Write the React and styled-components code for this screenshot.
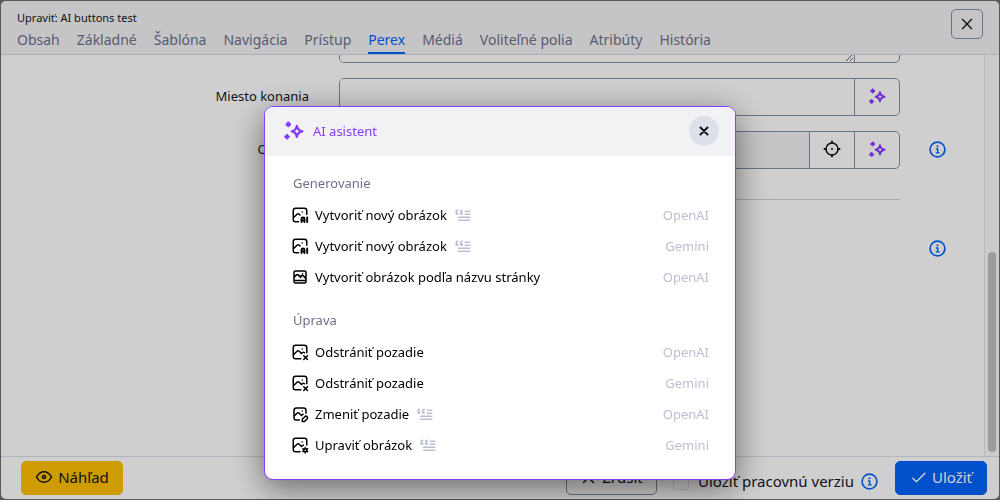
import React from "react";
import styled, { createGlobalStyle } from "styled-components";

const Global = createGlobalStyle`
  * { box-sizing: border-box; }
  body { margin: 0; background: #6e6e70; }
  body, button, input, textarea { font-family: "Noto Sans", "Open Sans", sans-serif; color: #13151b; }
  button { cursor: pointer; margin: 0; padding: 0; border: 0; background: none; }
`;

const Window = styled.div`
  height: 100vh;
  padding: 1px;
`;
const Editor = styled.main`
  height: 100%;
  display: flex;
  flex-direction: column;
  background: #fff;
  border-radius: 5px;
  overflow: hidden;
`;
const Header = styled.header`
  display: flex;
  justify-content: space-between;
  align-items: flex-start;
  flex: none;
  height: 54px;
  padding: 8px 16px 0;
  background: #f3f3f6;
  border-bottom: 1px solid #d5d8e3;
`;
const Title = styled.h1`
  margin: 0;
  font-size: 11px;
  font-weight: 400;
  line-height: 18px;
`;
const Tabs = styled.nav`
  display: flex;
  gap: 17px;
`;
const Tab = styled.a`
  height: 27px;
  font-size: 14px;
  line-height: 26px;
  white-space: nowrap;
  text-decoration: none;
  color: ${(p) => (p.$active ? "#0063fb" : "#6c718a")};
  border-bottom: 2px solid ${(p) => (p.$active ? "#0063fb" : "transparent")};
`;
const WindowClose = styled.button`
  display: grid;
  place-items: center;
  width: 32px;
  height: 30px;
  border: 1px solid #868ea5;
  border-radius: 5px;
`;
const Body = styled.div`
  flex: 1;
  min-height: 0;
  display: flex;
  overflow: hidden;
`;
const Form = styled.form`
  flex: 1;
  display: flex;
  flex-direction: column;
`;
const Field = styled.div`
  flex: none;
  display: grid;
  grid-template-columns: 338px minmax(0, 1fr) 84px;
  align-items: center;
  margin-bottom: 15px;
  ${(p) => p.$scrolled && "margin-top: -52px;"}
`;
const Label = styled.label`
  padding: 0 30px 2px 0;
  text-align: right;
  font-size: 13px;
`;
const Group = styled.div`
  display: flex;
  min-height: 38px;
  border: 1px solid #868ea5;
  border-radius: 5px;
  overflow: hidden;
`;
const TextInput = styled.input`
  flex: 1;
  min-width: 0;
  border: 0;
  padding: 0 12px;
  font-size: 13px;
  background: ${(p) => (p.readOnly ? "#f3f3f6" : "#fff")};
`;
const TextArea = styled.textarea`
  flex: 1;
  min-width: 0;
  height: 58px;
  border: 0;
  display: block;
`;
const Addon = styled.button`
  display: grid;
  place-items: center;
  width: 45px;
  padding-bottom: 2px;
  border-left: 1px solid #868ea5;
`;
const InfoButton = styled.button`
  display: grid;
  place-items: center;
  color: #0063fb;
`;
const Hint = styled.div`
  display: grid;
  place-items: center;
  padding: 0 10px 2px 0;
`;
const Divider = styled.hr`
  flex: none;
  margin: 15px 84px 40px 338px;
  border: 0;
  border-top: 1px solid #d0d0d3;
`;
const HintRow = styled.div`
  display: grid;
  grid-template-columns: 1fr 84px;
`;
const ScrollTrack = styled.div`
  flex: none;
  display: flex;
  flex-direction: column;
  justify-content: flex-end;
  width: 15px;
  padding: 4px 3px 4px 3px;
  background: #fafafa;
  border-left: 1px solid #e4e4e4;
`;
const ScrollThumb = styled.div`
  height: 51%;
  border-radius: 4px;
  background: #c1c1c1;
`;
const Footer = styled.footer`
  flex: none;
  display: flex;
  align-items: flex-start;
  height: 43px;
  padding: 4px 12px 0 20px;
  border-top: 1px solid #dfe1e9;
`;
const Action = styled.button`
  display: flex;
  align-items: center;
  justify-content: center;
  gap: 5px;
  height: 34px;
  padding-bottom: 2px;
  width: ${(p) => p.$width}px;
  font-size: 15px;
  border-radius: 5px;
  background: ${(p) => p.$bg || "#fff"};
  color: ${(p) => p.$fg || "#13151b"};
  border: 1px solid ${(p) => p.$bg || "#868ea5"};
`;
const Spacer = styled.div`
  flex: 1;
`;
const Draft = styled.div`
  display: flex;
  align-items: center;
  gap: 7px;
  padding: 7px 17px 0 16px;
`;
const DraftLabel = styled.label`
  display: flex;
  align-items: center;
  gap: 9px;
  font-size: 15px;
  line-height: 27px;
  white-space: nowrap;
`;
const Checkbox = styled.input`
  appearance: none;
  width: 16px;
  height: 16px;
  margin: 0;
  border: 1px solid #dcdee6;
  border-radius: 3px;
`;

const Overlay = styled.div`
  position: fixed;
  inset: 0;
  display: flex;
  justify-content: center;
  align-items: flex-start;
  padding-top: 106px;
  background: rgba(0, 0, 0, 0.19);
`;
const Dialog = styled.section`
  width: 472px;
  border: 1px solid #873bff;
  border-radius: 9px;
  background: #fff;
  overflow: hidden;
  box-shadow: 0 8px 32px rgba(0, 0, 0, 0.5);
`;
const DialogHeader = styled.header`
  display: flex;
  align-items: center;
  gap: 9px;
  height: 49px;
  padding: 0 16px 1px 19px;
  background: #f2f2f5;
  color: #873bff;
`;
const DialogTitle = styled.h2`
  flex: 1;
  margin: 0;
  font-size: 13px;
  font-weight: 400;
`;
const DialogClose = styled.button`
  display: grid;
  place-items: center;
  width: 30px;
  height: 30px;
  border-radius: 50%;
  background: #dde0e8;
`;
const DialogBody = styled.div`
  display: flex;
  flex-direction: column;
  gap: 13px;
  padding: 12px 26px 19px 26px;
`;
const GroupTitle = styled.h3`
  margin: 0;
  padding-left: 2px;
  font-size: 13px;
  font-weight: 400;
  line-height: 31px;
  color: #6c718a;
`;
const Option = styled.button`
  display: flex;
  align-items: center;
  gap: 6px;
  width: 100%;
  height: 31px;
  font-size: 13px;
  color: #000;
  text-align: left;
`;
const Provider = styled.span`
  margin-left: auto;
  color: #bbbfd1;
`;
const Quote = styled.span`
  display: flex;
  padding-left: 1px;
  color: #bbbfd3;
`;
const Svg = styled.svg`
  display: block;
  fill: none;
  stroke: currentColor;
  stroke-linecap: round;
  stroke-linejoin: round;
`;

function Icon({ size = 18, width = 2, children }) {
  return (
    <Svg width={size} height={size} viewBox="0 0 24 24" strokeWidth={width} aria-hidden="true">
      {children}
    </Svg>
  );
}
const Cross = ({ size, width }) => (
  <Icon size={size} width={width}>
    <path d="M5 5l14 14M19 5L5 19" />
  </Icon>
);
const Sparkles = ({ size = 17 }) => (
  <Svg width={size} height={size} viewBox="0 0 18 18" strokeWidth="2.100" color="#873bff" aria-hidden="true">
    <path d="M11.600 4.400c.5 3.200 1.600 4.300 4.900 4.900c-3.300.6-4.400 1.700-4.900 4.900c-.5-3.200-1.600-4.300-4.600-4.900c3-.6 4.100-1.700 4.600-4.900z" />
    <path d="M3.900 1.800v2.600M2.600 3.100h2.600M2.700 12.900v2.600M1.400 14.200h2.600" strokeWidth="2.500" />
  </Svg>
);
const Info = () => (
  <Svg width="17" height="17" viewBox="0 0 17 17" strokeWidth="1.700" aria-hidden="true">
    <circle cx="8.500" cy="8.500" r="7.400" />
    <path d="M7.400 8h1.300v3.800M7.400 11.900h2.700" strokeWidth="1.400" />
    <path d="M8.500 5.300v.1" strokeWidth="1.900" />
  </Svg>
);

const photoArt = {
  ai: (
    <>
      <path d="M15 8h.01M10 21h-4a3 3 0 0 1 -3 -3v-12a3 3 0 0 1 3 -3h12a3 3 0 0 1 3 3v5M3 16l5 -5c.928 -.893 2.072 -.893 3 0l1 1" />
      <path d="M14 21.4v-4a2 2 0 1 1 4 0v4M14 19.4h4M21.6 15.4v6" strokeWidth="2.5" />
    </>
  ),
  page: (
    <path d="M6 4h12a2 2 0 0 1 2 2v12a2 2 0 0 1 -2 2h-12a2 2 0 0 1 -2 -2v-12a2 2 0 0 1 2 -2zM4 16.500h16M4 12.500l3 -3c.9 -.9 2 -.9 3 0l3 3M12.500 11.500l1 -1c.9 -.9 2 -.9 3 0l3 3M15.500 7.500h.01" />
  ),
  remove: (
    <path d="M15 8h.01M13 21h-7a3 3 0 0 1 -3 -3v-12a3 3 0 0 1 3 -3h12a3 3 0 0 1 3 3v7M3 16l5 -5c.928 -.893 2.072 -.893 3 0l3 3M14 14l1 -1c.928 -.893 2.072 -.893 3 0M22 22l-5 -5M17 22l5 -5" />
  ),
  edit: (
    <path d="M15 8h.01M11 20h-4a3 3 0 0 1 -3 -3v-10a3 3 0 0 1 3 -3h10a3 3 0 0 1 3 3v4M4 15l4 -4c.928 -.893 2.072 -.893 3 0l3 3M14 14l1 -1c.31 -.298 .644 -.497 .987 -.596M18.42 15.61a2.100 2.100 0 0 1 2.970 2.970l-3.390 3.420h-3v-3l3.420 -3.390z" />
  ),
  adjust: (
    <>
      <path d="M15 8h.01M12 21h-6a3 3 0 0 1 -3 -3v-12a3 3 0 0 1 3 -3h12a3 3 0 0 1 3 3v6M3 16l5 -5c.928 -.893 2.072 -.893 3 0l3 3M14 14l1 -1c.48 -.46 1 -.7 1.600 -.67" />
      <circle cx="19" cy="19" r="2.200" strokeWidth="2.200" />
      <path d="M19 15.200v1M19 21.800v1M22.300 17.100l-.9 .5M16.600 20.400l-.9 .5M15.700 17.100l.9 .5M21.400 20.400l.9 .5" strokeWidth="1.800" />
    </>
  ),
};

const groups = [
  {
    title: "Generovanie",
    items: [
      { icon: "ai", text: "Vytvoriť nový obrázok", prompt: true, provider: "OpenAI" },
      { icon: "ai", text: "Vytvoriť nový obrázok", prompt: true, provider: "Gemini" },
      { icon: "page", text: "Vytvoriť obrázok podľa názvu stránky", provider: "OpenAI" },
    ],
  },
  {
    title: "Úprava",
    items: [
      { icon: "remove", text: "Odstrániť pozadie", provider: "OpenAI" },
      { icon: "remove", text: "Odstrániť pozadie", provider: "Gemini" },
      { icon: "edit", text: "Zmeniť pozadie", prompt: true, provider: "OpenAI" },
      { icon: "adjust", text: "Upraviť obrázok", prompt: true, provider: "Gemini" },
    ],
  },
];
const tabs = ["Obsah", "Základné", "Šablóna", "Navigácia", "Prístup", "Perex", "Médiá", "Voliteľné polia", "Atribúty", "História"];

export default function App() {
  return (
    <>
      <Global />
      <Window>
        <Editor>
          <Header>
            <div>
              <Title>Upraviť: AI buttons test</Title>
              <Tabs>
                {tabs.map((t) => (
                  <Tab key={t} href="#" $active={t === "Perex"}>{t}</Tab>
                ))}
              </Tabs>
            </div>
            <WindowClose aria-label="Zavrieť"><Cross size={16} width={2} /></WindowClose>
          </Header>
          <Body>
            <Form>
              <Field $scrolled>
                <span />
                <Group>
                  <TextArea aria-label="Perex" />
                  <Addon type="button" aria-label="AI asistent" />
                </Group>
              </Field>
              <Field>
                <Label htmlFor="place">Miesto konania</Label>
                <Group>
                  <TextInput id="place" />
                  <Addon type="button" aria-label="AI asistent"><Sparkles /></Addon>
                </Group>
              </Field>
              <Field>
                <Label htmlFor="image">Obrázok</Label>
                <Group>
                  <TextInput id="image" readOnly />
                  <Addon type="button" aria-label="Vybrať">
                    <Icon size={18} width={2}>
                      <circle cx="12" cy="12" r="8" />
                      <path d="M12 12h.01M12 2v2M12 20v2M2 12h2M20 12h2" strokeWidth="2.600" />
                    </Icon>
                  </Addon>
                  <Addon type="button" aria-label="AI asistent"><Sparkles /></Addon>
                </Group>
                <Hint>
                  <InfoButton type="button" aria-label="Informácie"><Info /></InfoButton>
                </Hint>
              </Field>
              <Divider />
              <HintRow>
                <span />
                <Hint>
                  <InfoButton type="button" aria-label="Informácie"><Info /></InfoButton>
                </Hint>
              </HintRow>
            </Form>
            <ScrollTrack><ScrollThumb /></ScrollTrack>
          </Body>
          <Footer>
            <Action $width={102} $bg="#ffc000">
              <Icon size={18} width={2}>
                <circle cx="12" cy="12" r="2" />
                <path d="M22 12c-2.700 4.700 -6 7 -10 7s-7.300 -2.300 -10 -7c2.700 -4.700 6 -7 10 -7s7.300 2.300 10 7" />
              </Icon>
              Náhľad
            </Action>
            <Spacer />
            <Action $width={91}><Cross size={17} width={2} />Zrušiť</Action>
            <Draft>
              <DraftLabel><Checkbox type="checkbox" />Uložiť pracovnú verziu</DraftLabel>
              <InfoButton aria-label="Informácie"><Info /></InfoButton>
            </Draft>
            <Action $width={92} $bg="#0063fb" $fg="#fff">
              <Icon size={17} width={2}><path d="M4 13l5 5L21 6" /></Icon>
              Uložiť
            </Action>
          </Footer>
        </Editor>
      </Window>
      <Overlay>
        <Dialog role="dialog" aria-labelledby="ai-title">
          <DialogHeader>
            <Sparkles size={20} />
            <DialogTitle id="ai-title">AI asistent</DialogTitle>
            <DialogClose aria-label="Zavrieť"><Cross size={12} width={4} /></DialogClose>
          </DialogHeader>
          <DialogBody>
            {groups.map((g) => (
              <div key={g.title}>
                <GroupTitle>{g.title}</GroupTitle>
                {g.items.map((it, i) => (
                  <Option key={i}>
                    <Icon size={18} width={2}>{photoArt[it.icon]}</Icon>
                    {it.text}
                    {it.prompt && (
                      <Quote>
                        <Icon size={18} width={2}>
                          <path d="M6 15h15M21 19h-15M15 11h6M21 7h-6M9 9h1a1 1 0 1 1 -1 1v-2.500a2 2 0 0 1 2 -2M3 9h1a1 1 0 1 1 -1 1v-2.500a2 2 0 0 1 2 -2" />
                        </Icon>
                      </Quote>
                    )}
                    <Provider>{it.provider}</Provider>
                  </Option>
                ))}
              </div>
            ))}
          </DialogBody>
        </Dialog>
      </Overlay>
    </>
  );
}
